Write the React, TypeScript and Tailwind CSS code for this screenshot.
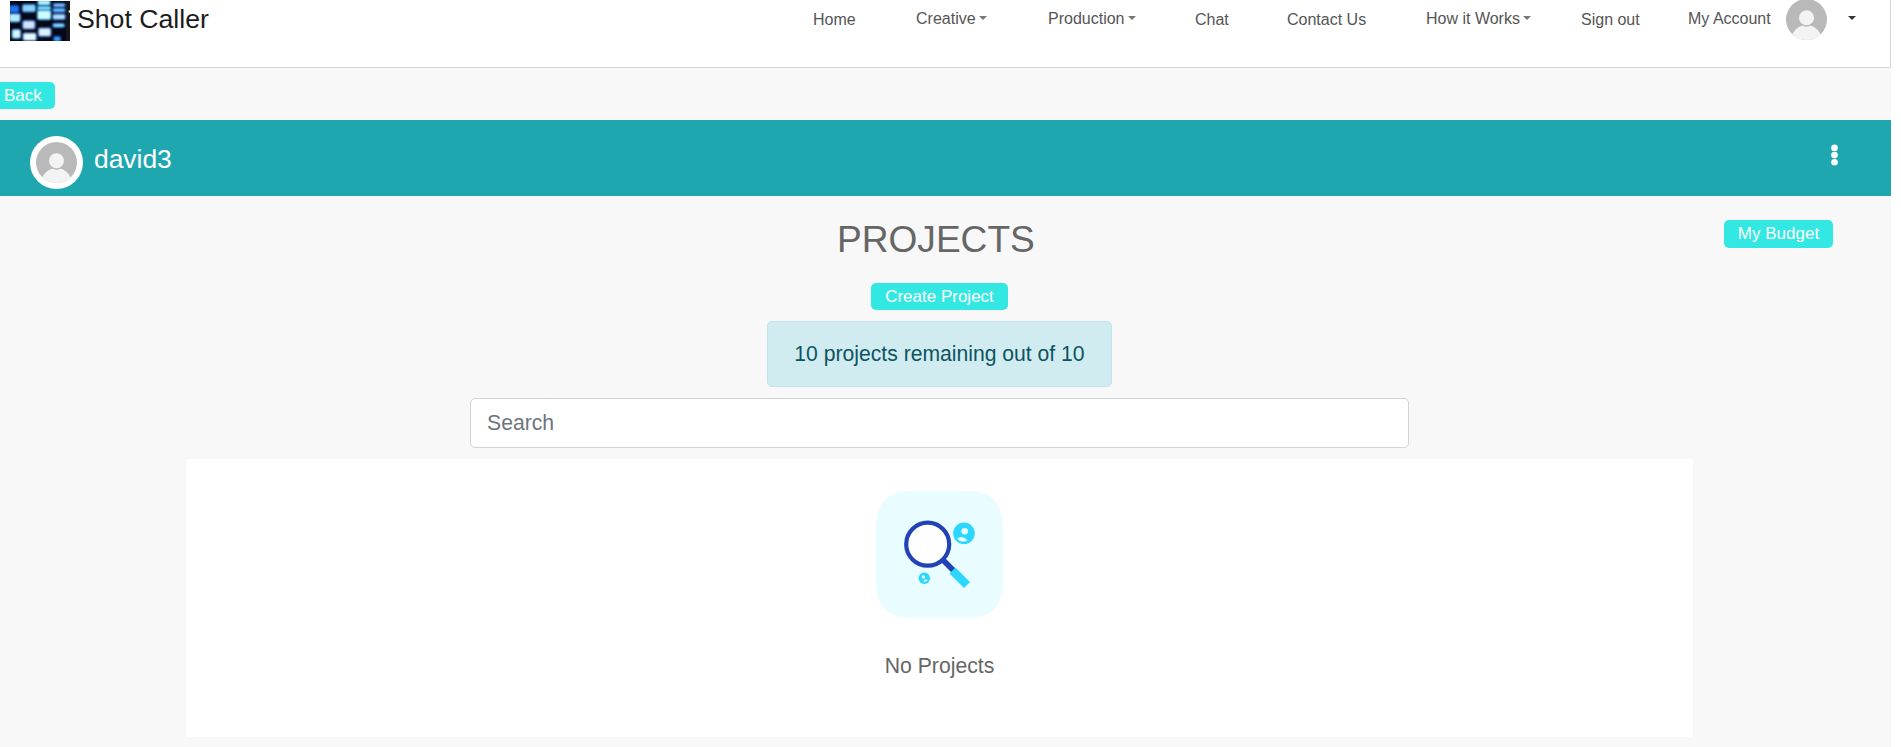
import React from "react";

type LogoBlock = [x: number, y: number, w: number, h: number, outer: string, inner: string];

const logoBlocks: LogoBlock[] = [
  [-4, 12, 32, 24, "#0b3fc0", "#1f78f0"],
  [-4, 37, 36, 27, "#1467e8", "#b4ecff"],
  [5, 84, 28, 29, "#1a78e8", "#d0faff"],
  [36, 9, 42, 25, "#1a6fe0", "#8cd4ff"],
  [37, 58, 39, 27, "#2a6ff0", "#d2e4ff"],
  [38, 95, 42, 25, "#2b82f0", "#eefaff"],
  [82, -4, 40, 18, "#1b8fe0", "#b0f4ff"],
  [81, 14, 43, 15, "#1486e0", "#80dcff"],
  [81, 27, 43, 30, "#2aa8f8", "#ccffff"],
  [84, 80, 40, 27, "#2b78f0", "#dcf0ff"],
  [128, 6, 39, 13, "#0f58d8", "#8cccff"],
  [127, 20, 40, 15, "#0f58d8", "#66baff"],
  [127, 38, 40, 19, "#1a66e8", "#b4deff"],
  [127, 66, 38, 14, "#0e60d0", "#8ce0ff"],
  [130, 105, 23, 18, "#0a4cd0", "#3ca0ff"],
];

function Logo() {
  return (
    <svg className="mt-px h-[40px] w-[60px] shrink-0" viewBox="0 0 180 120">
      <defs>
        <filter id="glow" x="-30%" y="-60%" width="160%" height="220%" colorInterpolationFilters="sRGB">
          <feGaussianBlur stdDeviation="3.2" />
        </filter>
      </defs>
      <rect width="180" height="120" fill="#040818" />
      <rect x="168" width="12" height="120" fill="#15171a" />
      {logoBlocks.map(([x, y, w, h, outer, inner]) => (
        <g key={`${x},${y}`} filter="url(#glow)">
          <rect x={x} y={y} width={w} height={h} rx="6" fill={outer} />
          <rect x={x + 2} y={y + 2} width={w - 4} height={h - 4} rx="4" fill={inner} />
        </g>
      ))}
      <rect x="176" y="28" width="4" height="7" fill="#e8e8e8" />
    </svg>
  );
}

function Avatar({ className }: { className: string }) {
  return (
    <svg className={className} viewBox="0 0 41 41">
      <defs>
        <clipPath id="face">
          <circle cx="20.5" cy="20.5" r="20.5" />
        </clipPath>
      </defs>
      <g clipPath="url(#face)">
        <rect width="41" height="41" fill="#b9b9b9" />
        <path d="M5 38C8 31 13 26.8 17 26.8Q20.5 28.6 24 26.8C28 26.8 33 31 36 38V42H5Z" fill="#f3f3f3" />
        <circle cx="20.5" cy="18.8" r="7.5" fill="#f3f3f3" />
      </g>
    </svg>
  );
}

function Caret({ className }: { className: string }) {
  return (
    <svg className={className} viewBox="0 0 8 4" fill="currentColor">
      <path d="M0 0H8L4 4Z" />
    </svg>
  );
}

interface NavItem {
  label: string;
  width: string;
  menu?: boolean;
}

const navItems: NavItem[] = [
  { label: "Home", width: "w-[103px]" },
  { label: "Creative", width: "w-[132px]", menu: true },
  { label: "Production", width: "w-[147px]", menu: true },
  { label: "Chat", width: "w-[92px]" },
  { label: "Contact Us", width: "w-[139px]" },
  { label: "How it Works", width: "w-[155px]", menu: true },
  { label: "Sign out", width: "w-[107px]" },
];

function Header() {
  return (
    <header className="flex h-[68px] items-start border-r border-b border-[#d6d9da] bg-white pl-[10px]">
      <Logo />
      <span className="ml-[7px] w-[736px] text-[26.67px] leading-[38px] text-[#1c1c1c]">Shot Caller</span>
      <nav className="flex text-[16px] leading-[24px] text-[#555]">
        {navItems.map((item) => (
          <a
            key={item.label}
            className={`${item.width} ${item.menu ? "mt-[7px]" : "mt-[8px]"} flex shrink-0 whitespace-nowrap`}
          >
            {item.label}
            {item.menu && <Caret className="mt-[9px] ml-[3px] h-[4px] w-[8px] text-[#777]" />}
          </a>
        ))}
        <a className="mt-[7px] w-[98px] shrink-0 whitespace-nowrap">My Account</a>
      </nav>
      <Avatar className="-mt-px h-[41px] w-[41px] shrink-0" />
      <Caret className="mt-[16px] ml-[21px] h-[4px] w-[8px] shrink-0 text-[#333]" />
    </header>
  );
}

export default function App() {
  return (
    <div className="h-[747px] w-[1901px] overflow-hidden bg-white font-['Liberation_Sans',Arial,sans-serif]">
      <div className="flex h-full w-[1891px] flex-col bg-[#f8f8f8]">
        <Header />

        <button className="mt-[14px] h-[27px] w-[55px] shrink-0 rounded-r-[5px] bg-[#33e8e2] pl-[4px] text-left text-[17px] leading-[27px] text-white">
          Back
        </button>

        <section className="mt-[11px] flex h-[76px] shrink-0 items-start bg-[#1fa7b0] pl-[30px]">
          <div className="mt-[16px] rounded-full bg-white p-[6px]">
            <Avatar className="block h-[41px] w-[41px]" />
          </div>
          <span className="mt-[19px] ml-[11px] text-[26.4px] leading-[40px] text-white">david3</span>
          <svg className="mt-[24px] mr-[53px] ml-auto h-[22px] w-[7px]" viewBox="0 0 7 22" fill="#fff">
            <circle cx="3.5" cy="3.9" r="3.3" />
            <circle cx="3.5" cy="11.1" r="3.3" />
            <circle cx="3.5" cy="18.3" r="3.3" />
          </svg>
        </section>

        <main className="flex flex-col">
          <div className="flex h-[87px] items-start pr-[58px] pl-[837px]">
            <h1 className="mt-[20px] text-[37.1px] leading-[46px] text-[#666]">PROJECTS</h1>
            <button className="mt-[24px] ml-auto h-[28px] w-[109px] rounded-[5px] bg-[#33e8e2] text-[17px] leading-[26px] text-white">
              My Budget
            </button>
          </div>

          <div className="ml-[186px] flex w-[1507px] flex-col items-center">
            <button className="h-[27px] w-[137px] rounded-[5px] bg-[#33e8e2] text-[17px] leading-[26px] text-white">
              Create Project
            </button>
            <div className="mt-[11px] flex h-[66px] w-[345px] items-center justify-center rounded-[5px] border border-[#bee5eb] bg-[#d1ecf1] text-[21.15px] leading-[32px] whitespace-nowrap text-[#0c5460]">
              10 projects remaining out of 10
            </div>
            <input
              type="text"
              placeholder="Search"
              className="mt-[11px] h-[50px] w-[939px] rounded-[5px] border border-[#ced4da] bg-white px-[16px] text-[21.2px] text-[#495057] placeholder:text-[#6c757d]"
            />
            <div className="mt-[11px] flex h-[278px] w-full flex-col items-center rounded-[3px] bg-white pt-[32px]">
              <svg className="h-[127px] w-[127px] shrink-0" viewBox="0 0 127 127">
                <path
                  d="M38 0H89C116 0 127 11 127 38V89C127 116 116 127 89 127H38C11 127 0 116 0 89V38C0 11 11 0 38 0Z"
                  fill="#e9fcff"
                />
                <path d="M65.5 67.5L78 80" stroke="#2343b5" strokeWidth="5.6" />
                <circle cx="51.7" cy="53.2" r="21.5" fill="#fff" stroke="#2343b5" strokeWidth="4.2" />
                <path d="M76.5 79.5L91 94" stroke="#2bd7ff" strokeWidth="8.4" />
                <circle cx="88" cy="42.3" r="10.8" fill="#2bd7ff" />
                <circle cx="88.7" cy="40.3" r="3.3" fill="#e9fcff" />
                <path d="M81.3 47.7C84 45 88.5 45.5 91.5 49.6C88 51.6 83.5 50.5 81.3 47.7Z" fill="#e9fcff" />
                <circle cx="48.3" cy="87.2" r="5.7" fill="#2bd7ff" />
                <circle cx="47.4" cy="86" r="1.7" fill="#e9fcff" />
                <path d="M47.5 90.4C48.5 88.4 50 88.2 51.6 89C50.6 90.6 49 91 47.5 90.4Z" fill="#e9fcff" />
              </svg>
              <p className="mt-[32px] text-[21.2px] leading-[32px] text-[#666]">No Projects</p>
            </div>
          </div>
        </main>
      </div>
    </div>
  );
}
